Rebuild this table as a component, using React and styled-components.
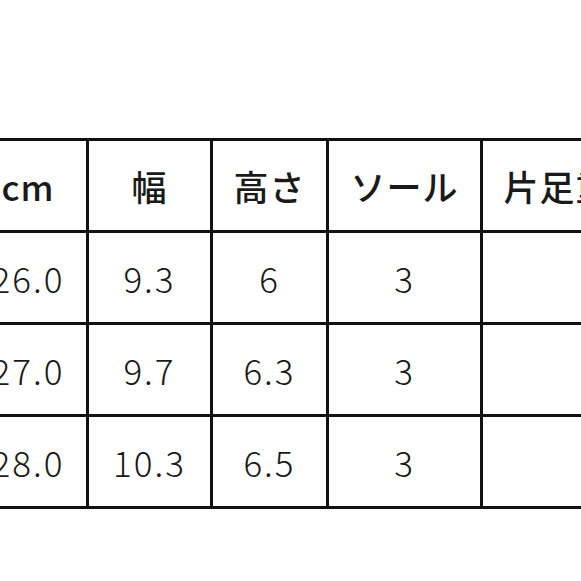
import React from "react";
import styled, { createGlobalStyle } from "styled-components";

const GlobalStyle = createGlobalStyle`
  html, body {
    margin: 0;
    padding: 0;
    background: #ffffff;
  }
  body {
    width: 581px;
    height: 581px;
    overflow: hidden;
  }
`;

const Page = styled.div`
  width: 581px;
  height: 581px;
  overflow: hidden;
  padding-top: 138px;
  box-sizing: border-box;
`;

const SizeTable = styled.table`
  border-collapse: collapse;
  table-layout: fixed;
  margin-left: -33px;
  width: ${({ $width }) => $width}px;
  font-family: "Noto Sans CJK JP", "Noto Sans", sans-serif;
  color: #1a1a1a;
`;

const HeadCell = styled.th`
  height: 89px;
  border: 3px solid #111111;
  padding: 0;
  font-size: 35px;
  font-weight: 500;
  letter-spacing: 1px;
  text-align: center;
  vertical-align: middle;
`;

const Cell = styled.td`
  height: 89px;
  border: 3px solid #111111;
  padding: 0;
  font-size: 35px;
  font-weight: 300;
  letter-spacing: 2px;
  text-align: center;
  vertical-align: middle;
`;

const columns = [
  { label: "cm", width: 119 },
  { label: "幅", width: 124 },
  { label: "高さ", width: 116 },
  { label: "ソール", width: 154 },
  { label: "片足重量", width: 188 },
];

const rows = [
  ["26.0", "9.3", "6", "3", ""],
  ["27.0", "9.7", "6.3", "3", ""],
  ["28.0", "10.3", "6.5", "3", ""],
];

export default function App() {
  const total = columns.reduce((sum, c) => sum + c.width, 0);
  return (
    <>
      <GlobalStyle />
      <Page>
        <SizeTable $width={total}>
          <colgroup>
            {columns.map((c) => (
              <col key={c.label} style={{ width: c.width }} />
            ))}
          </colgroup>
          <thead>
            <tr>
              {columns.map((c) => (
                <HeadCell key={c.label}>{c.label}</HeadCell>
              ))}
            </tr>
          </thead>
          <tbody>
            {rows.map((row) => (
              <tr key={row[0]}>
                {row.map((value, i) => (
                  <Cell key={i}>{value}</Cell>
                ))}
              </tr>
            ))}
          </tbody>
        </SizeTable>
      </Page>
    </>
  );
}
